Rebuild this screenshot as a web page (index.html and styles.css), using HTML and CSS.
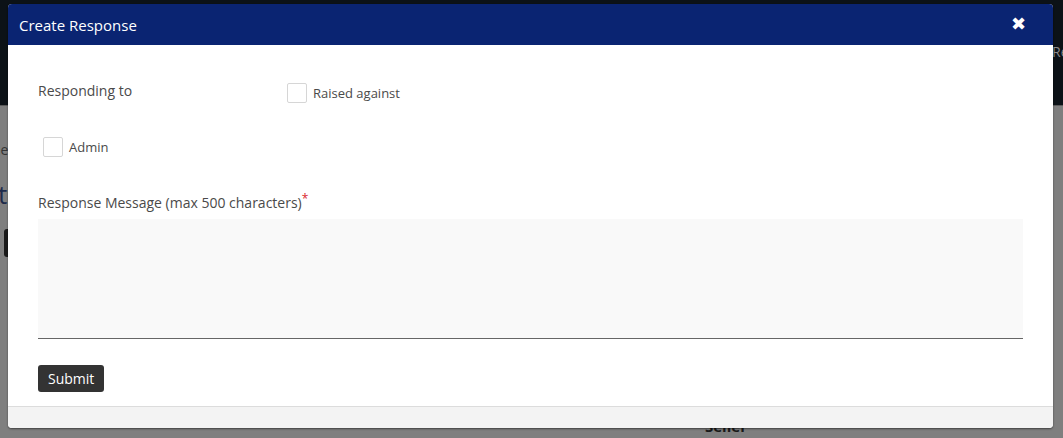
FILE: index.html
```html
<!DOCTYPE html>
<html>
<head>
<meta charset="utf-8">
<link rel="stylesheet" href="styles.css">
</head>
<body>
<div class="backdrop">
  <div class="bg-top"><span class="bg-re">Re</span></div>
  <div class="bg-rest">
    <span class="bg-he">he</span>
    <span class="bg-t">t</span>
    <span class="bg-btn"></span>
    <span class="bg-seller">Seller</span>
  </div>
</div>
<div class="modal">
  <div class="modal-header">
    <span class="modal-title">Create Response</span>
    <span class="modal-close">&#10006;</span>
  </div>
  <div class="modal-body">
    <div class="row-responding">
      <span class="label-responding">Responding to</span>
      <label class="check"><span class="box"></span><span>Raised against</span></label>
    </div>
    <div class="row-admin">
      <label class="check"><span class="box"></span><span>Admin</span></label>
    </div>
    <div class="field-label">Response Message (max 500 characters)<span class="req">*</span></div>
    <div class="textarea"></div>
    <button class="submit">Submit</button>
  </div>
  <div class="modal-footer"></div>
</div>
</body>
</html>
```
FILE: styles.css
```css
html, body {
  margin: 0;
  padding: 0;
  width: 1063px;
  height: 438px;
  overflow: hidden;
  font-family: "Open Sans", "Liberation Sans", sans-serif;
}
.backdrop {
  width: 1063px;
  height: 438px;
  background: #7f7f7f;
  display: flex;
  flex-direction: column;
}
.bg-top {
  height: 105px;
  background: #0c1217;
  border-bottom: 1px solid #5a5a5a;
  position: relative;
}
.bg-re {
  position: absolute;
  left: 1052px;
  top: 42px;
  color: #8a8a8a;
  font-size: 14px;
}
.bg-rest {
  flex: 1;
  position: relative;
}
.bg-he {
  position: absolute;
  left: -8px;
  top: 34px;
  color: #333;
  font-size: 14px;
}
.bg-t {
  position: absolute;
  left: -2px;
  top: 70px;
  color: #1d2a4a;
  font-size: 26px;
}
.bg-btn {
  position: absolute;
  left: 4px;
  top: 123px;
  width: 10px;
  height: 28px;
  background: #1a1a1a;
  border-radius: 3px;
}
.bg-seller {
  position: absolute;
  left: 705px;
  top: 310px;
  color: #1a1a1a;
  font-weight: bold;
  font-size: 15px;
}
.modal {
  position: absolute;
  left: 8px;
  top: 4px;
  width: 1045px;
  height: 424px;
  background: #fff;
  border-radius: 4px;
  box-shadow: 0 1px 2px rgba(0,0,0,0.5);
  display: flex;
  flex-direction: column;
  overflow: hidden;
}
.modal-header {
  height: 41px;
  flex: none;
  background: #0a2472;
  color: #fff;
  display: flex;
  align-items: center;
  justify-content: space-between;
  padding: 0 27px 0 11px;
}
.modal-title {
  font-size: 15px;
}
.modal-close {
  font-size: 18px;
  font-weight: bold;
  font-family: "DejaVu Sans", sans-serif;
  margin-top: -3px;
}
.modal-body {
  flex: 1;
  padding: 36px 30px 0 30px;
  color: #4a4a4a;
  font-size: 14px;
  display: flex;
  flex-direction: column;
  align-items: flex-start;
}
.row-responding {
  display: flex;
  align-items: center;
  height: 24px;
}
.label-responding {
  width: 249px;
  margin-top: -6px;
}
.check {
  display: flex;
  align-items: center;
  gap: 6px;
  font-size: 13px;
}
.box {
  width: 18px;
  height: 18px;
  border: 1px solid #d6d6d6;
  border-radius: 2px;
  background: #fff;
}
.row-admin {
  margin-top: 30px;
  padding-left: 5px;
  height: 24px;
  display: flex;
  align-items: center;
}
.field-label {
  margin-top: 31px;
  line-height: 18px;
}
.req {
  color: #d9262e;
  vertical-align: 5px;
  font-size: 12px;
}
.textarea {
  margin-top: 7px;
  height: 119px;
  background: #f9f9f9;
  border-bottom: 1px solid #666;
  align-self: stretch;
}
.submit {
  margin-top: 26px;
  height: 27px;
  padding: 0 10px;
  background: #333;
  color: #fff;
  border: none;
  border-radius: 3px;
  font-family: "Open Sans", "Liberation Sans", sans-serif;
  font-size: 14px;
}
.modal-footer {
  height: 21px;
  flex: none;
  background: #f3f3f3;
  border-top: 1px solid #dcdcdc;
}
```
